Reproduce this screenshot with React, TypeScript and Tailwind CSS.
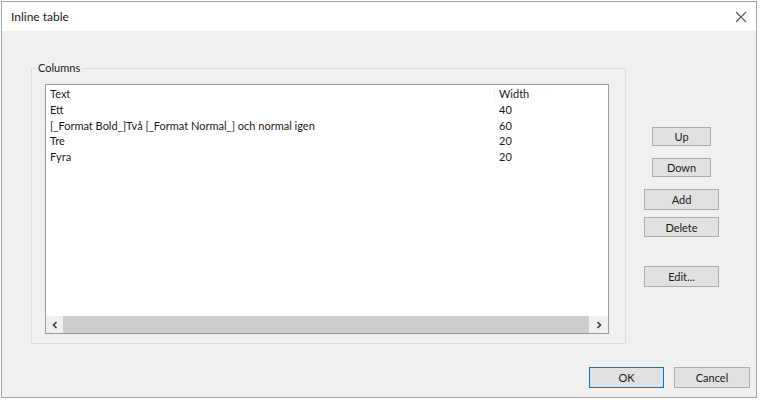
import React from 'react'

const rows = [
  { text: 'Ett', width: '40' },
  { text: '[_Format Bold_]Två [_Format Normal_] och normal igen', width: '60' },
  { text: 'Tre', width: '20' },
  { text: 'Fyra', width: '20' },
]

function Btn({ label, className = '' }: { label: string; className?: string }) {
  return (
    <button
      className={`flex items-center justify-center border border-[#adadad] bg-[#e1e1e1] text-[11px] leading-none text-[#1a1a1a] ${className}`}
    >
      {label}
    </button>
  )
}

export default function App() {
  return (
    <div
      className="h-[400px] w-[763px] bg-white pl-[1px] pt-[1px] text-[#1a1a1a]"
      style={{ fontFamily: 'Lato, "Noto Sans", "Liberation Sans", sans-serif' }}
    >
      <div className="flex h-[397px] w-[756px] flex-col border border-[#a5a5a5]">
        {/* Title bar */}
        <div className="flex h-[29px] items-center justify-between bg-white pl-[9px] pr-[8px]">
          <span className="text-[12px]">Inline table</span>
          <svg width="12" height="12" viewBox="0 0 12 12" className="mr-[1px]">
            <path d="M1 1 L11 11 M11 1 L1 11" stroke="#5a5a5a" strokeWidth="1.1" />
          </svg>
        </div>

        {/* Body */}
        <div className="flex flex-1 flex-col bg-[#f0f0f0] pl-[29px] pt-[29px]">
          <div className="flex">
            <fieldset className="w-[595px] border border-[#dcdcdc]">
              <legend className="ml-[4px] px-[2px] text-[11px] leading-[16px]">Columns</legend>
              <div className="mb-[9px] ml-[13px] mr-[16px] mt-[8px] flex h-[250px] flex-col border border-[#9a9a9a] bg-white">
                <div className="flex-1 pt-[1px] text-[11px] leading-[15.75px]">
                  <div className="flex">
                    <div className="w-[448px] pl-[4px]">Text</div>
                    <div className="border-l border-[#f0f0f0] pl-[4px]">Width</div>
                  </div>
                  {rows.map((r) => (
                    <div key={r.text} className="flex">
                      <div className="w-[448px] pl-[4px]">{r.text}</div>
                      <div className="pl-[5px]">{r.width}</div>
                    </div>
                  ))}
                </div>
                {/* Horizontal scrollbar */}
                <div className="flex h-[17px] bg-[#f0f0f0]">
                  <div className="flex w-[17px] items-center justify-center">
                    <svg width="8" height="8" viewBox="0 0 8 8">
                      <path d="M5.5 1 L2.5 4 L5.5 7" fill="none" stroke="#404040" strokeWidth="1.7" />
                    </svg>
                  </div>
                  <div className="flex-1 bg-[#cdcdcd]" />
                  <div className="flex w-[19px] items-center justify-center">
                    <svg width="8" height="8" viewBox="0 0 8 8">
                      <path d="M2.5 1 L5.5 4 L2.5 7" fill="none" stroke="#404040" strokeWidth="1.7" />
                    </svg>
                  </div>
                </div>
              </div>
            </fieldset>

            <div className="ml-[18px] flex w-[75px] flex-col items-center pt-[67px]">
              <Btn label="Up" className="h-[19px] w-[59px]" />
              <Btn label="Down" className="mt-[12px] h-[19px] w-[59px]" />
              <Btn label="Add" className="mt-[12px] h-[21px] w-[75px]" />
              <Btn label="Delete" className="mt-[7px] h-[20px] w-[75px]" />
              <Btn label="Edit..." className="mt-[29px] h-[21px] w-[75px]" />
            </div>
          </div>

          <div className="mt-[23px] flex justify-end gap-[10px] pr-[6px]">
            <Btn label="OK" className="h-[21px] w-[75px] !border-[#0078d7]" />
            <Btn label="Cancel" className="h-[21px] w-[76px]" />
          </div>
        </div>
      </div>
    </div>
  )
}
